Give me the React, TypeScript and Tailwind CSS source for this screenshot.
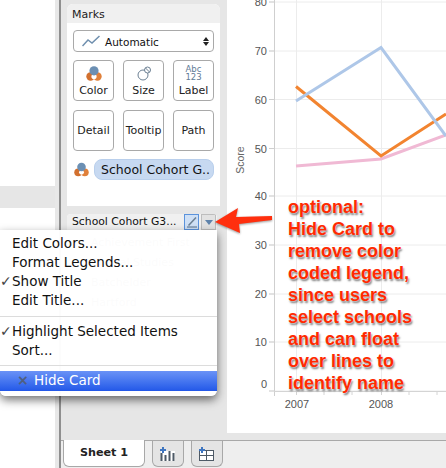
const legendNames = ['Achievement First', 'Capital Studies', 'Batchelder', 'Hartford'];
const yTicks = [
  { label: '80', y: 2, ty: 6 },
  { label: '70', y: 51, ty: 55 },
  { label: '60', y: 99.5, ty: 103.5 },
  { label: '50', y: 148.5, ty: 152.5 },
  { label: '40', y: 196, ty: 200 },
  { label: '30', y: 245, ty: 249 },
  { label: '20', y: 294, ty: 298 },
  { label: '10', y: 342, ty: 346 },
  { label: '0', y: 391, ty: 388 },
];

function ColorIcon({ className }: { className?: string }) {
  return (
    <svg viewBox="0 0 16 15" className={className}>
      <circle cx="4.5" cy="10.5" r="4.2" fill="#d2702f" />
      <circle cx="11.5" cy="10.5" r="4.2" fill="#e0803a" />
      <circle cx="8" cy="10.5" r="2.6" fill="#ffffff" />
      <circle cx="8" cy="4.8" r="4.6" fill="#6b8fb3" />
    </svg>
  );
}

function MarkButton({ label, icon }: { label: string; icon?: React.ReactNode }) {
  return (
    <div className="w-[41px] h-[41px] rounded-[4px] border border-[#a9a9a9] bg-white flex flex-col items-center justify-center">
      {icon && <div className="h-[16px] flex items-center justify-center mb-[3px] mt-[2px]">{icon}</div>}
      <span className="text-[11px] leading-[14px] text-[#222] whitespace-nowrap">{label}</span>
    </div>
  );
}

function MenuItem({ label, checked }: { label: string; checked?: boolean }) {
  return (
    <div className="relative h-[19px] pl-[12px] text-[13.5px] leading-[19px] text-[#111] whitespace-nowrap">
      {checked && <span className="absolute left-0 top-0 text-[#444] text-[14px]">✓</span>}
      {label}
    </div>
  );
}

function Chart() {
  return (
    <svg viewBox="227 0 219 433" className="block w-[219px] h-[433px] bg-white">
      {yTicks.map((t) => (
        <g key={t.label}>
          <line x1="269" x2="446" y1={t.y} y2={t.y} stroke="#ececec" />
          <line x1="269" x2="274" y1={t.y} y2={t.y} stroke="#cfcfcf" />
          <text x="267" y={t.ty} textAnchor="end" fontSize="11" fill="#555" fontFamily="Liberation Sans">
            {t.label}
          </text>
        </g>
      ))}
      <line x1="296.5" x2="296.5" y1="0" y2="391" stroke="#ececec" />
      <line x1="381.5" x2="381.5" y1="0" y2="391" stroke="#ececec" />
      <line x1="274.5" x2="274.5" y1="0" y2="396" stroke="#cfcfcf" />
      <line x1="274" x2="446" y1="391.5" y2="391.5" stroke="#d4d4d4" />
      {[296.5, 324, 352, 381.5, 409, 437].map((x) => (
        <line key={x} x1={x} x2={x} y1="391" y2="395" stroke="#d4d4d4" />
      ))}
      <text x="297" y="408" textAnchor="middle" fontSize="11" fill="#555" fontFamily="Liberation Sans">2007</text>
      <text x="381" y="408" textAnchor="middle" fontSize="11" fill="#555" fontFamily="Liberation Sans">2008</text>
      <text
        transform="translate(244 160) rotate(-90)"
        textAnchor="middle"
        fontSize="10.5"
        fill="#666"
        fontFamily="Liberation Sans"
      >
        Score
      </text>
      <polyline points="296,166 381,159 446,135" fill="none" stroke="#f0b9d4" strokeWidth="3" />
      <polyline points="296,86.5 381,156 446,114" fill="none" stroke="#f28430" strokeWidth="3" />
      <polyline points="296,101 381,47.5 446,136" fill="none" stroke="#aec7e8" strokeWidth="3" />
    </svg>
  );
}

export default function App() {
  return (
    <div className="relative flex w-[446px] h-[468px] overflow-hidden bg-white font-['DejaVu_Sans',sans-serif]">
      {/* left data pane */}
      <div className="w-[55px] shrink-0 flex flex-col bg-white">
        <div className="h-[186px]" />
        <div className="h-[22px] bg-[#e6e6e6]" />
      </div>
      <div className="w-[4px] shrink-0 bg-[#e8e8e8]" />
      <div className="w-[2px] shrink-0 bg-[#8f8f8f]" />

      <div className="flex-1 flex flex-col min-w-0">
        <div className="h-[433px] flex bg-[#e6e6e6]">
          {/* cards */}
          <div className="w-[166px] shrink-0 pl-[6px] pt-[4px] flex flex-col">
            <div className="w-[153px] h-[202px] bg-white rounded-t-[6px] overflow-hidden">
              <div className="h-[19px] bg-[#f0f0f0] pl-[5px] pt-[1px] text-[11px] leading-[19px] text-[#222]">Marks</div>
              <div className="px-[6px] pt-[7px]">
                <div className="h-[22px] rounded-[4px] border border-[#a9a9a9] flex items-center pl-[8px] pr-[4px]">
                  <svg viewBox="0 0 18 12" className="w-[18px] h-[12px]">
                    <polyline points="0.5,11 6,5 10,8 17.5,1" fill="none" stroke="#6f8fae" strokeWidth="1.5" />
                  </svg>
                  <span className="ml-[5px] flex-1 text-[10.5px] leading-[20px] pt-[1px] text-[#111]">Automatic</span>
                  <div className="flex flex-col gap-[1px]">
                    <div className="w-0 h-0 border-x-[3px] border-x-transparent border-b-[4px] border-b-[#222]" />
                    <div className="w-0 h-0 border-x-[3px] border-x-transparent border-t-[4px] border-t-[#222]" />
                  </div>
                </div>
                <div className="mt-[8px] grid grid-cols-[41px_41px_41px] gap-x-[9px] gap-y-[9px]">
                  <MarkButton label="Color" icon={<ColorIcon className="w-[16px] h-[15px]" />} />
                  <MarkButton
                    label="Size"
                    icon={
                      <svg viewBox="0 0 14 15" className="w-[14px] h-[15px]">
                        <circle cx="6" cy="9" r="5" fill="none" stroke="#6b7f92" strokeWidth="1" />
                        <circle cx="10.5" cy="4" r="3" fill="#fff" stroke="#6b7f92" strokeWidth="1" />
                        <line x1="8.5" y1="2" x2="12.5" y2="6" stroke="#6b7f92" strokeWidth="1" />
                      </svg>
                    }
                  />
                  <MarkButton
                    label="Label"
                    icon={
                      <div className="flex flex-col items-center text-[8.5px] leading-[8px] text-[#5f7b96]">
                        <span>Abc</span>
                        <span>123</span>
                      </div>
                    }
                  />
                  <MarkButton label="Detail" />
                  <MarkButton label="Tooltip" />
                  <MarkButton label="Path" />
                </div>
                <div className="mt-[8px] flex items-center">
                  <ColorIcon className="w-[15px] h-[15px] ml-[1px]" />
                  <div className="ml-[5px] w-[120px] h-[21px] rounded-[8px] bg-[#c7d9f1] border border-[#b9cfec] pl-[6px] text-[12.5px] leading-[19px] text-[#111] whitespace-nowrap overflow-hidden">
                    School Cohort G..
                  </div>
                </div>
              </div>
            </div>

            {/* legend card, mostly behind the menu */}
            <div className="mt-[8px] w-[150px] h-[99px] bg-white rounded-t-[4px] overflow-hidden">
              <div className="h-[16px] bg-[#f0f0f0] flex items-center pl-[5px] pr-[1px]">
                <span className="flex-1 text-[10.8px] text-[#111] whitespace-nowrap">School Cohort G3...</span>
                <div className="w-[15px] h-[16px] bg-[#cfe0f5] border border-[#5b93dc] flex items-center justify-center">
                  <svg viewBox="0 0 12 12" className="w-[12px] h-[12px]">
                    <line x1="2.5" y1="9.5" x2="10" y2="1.5" stroke="#6b7f92" strokeWidth="1.6" />
                    <line x1="1" y1="11" x2="11" y2="11" stroke="#54708c" strokeWidth="1" />
                  </svg>
                </div>
                <div className="ml-[2px] w-[15px] h-[16px] bg-[#e2e2e2] border border-[#bdbdbd] flex items-center justify-center">
                  <div className="w-0 h-0 border-x-[4px] border-x-transparent border-t-[5px] border-t-[#5f83ab]" />
                </div>
              </div>
              <div className="pl-[24px] pt-[3px] text-[11px] leading-[20px] text-[#888]">
                {legendNames.map((n) => (
                  <div key={n} className="whitespace-nowrap">{n}</div>
                ))}
              </div>
            </div>
          </div>
          <Chart />
        </div>
        <div className="h-[7px] bg-[#e6e6e6]" />

        {/* sheet tabs */}
        <div className="h-[28px] bg-[#eeeeee] border-t border-[#a8a8a8] flex items-start pl-[2px]">
          <div className="-mt-px w-[82px] h-[27px] bg-white border-x border-b border-[#a8a8a8] rounded-b-[6px] flex items-center justify-center text-[11.2px] font-bold text-[#222]">
            Sheet 1
          </div>
          <div className="ml-[7px] w-[32px] h-[26px] bg-[#e4e4e4] border-x border-b border-[#a8a8a8] rounded-b-[6px] flex items-center justify-center">
            <svg viewBox="0 0 16 14" className="w-[16px] h-[14px]">
              <path d="M1 14V4h14v10" fill="#fff" />
              <path d="M0.5 14V6h2v8zM4.5 14V8h2v6zM8.5 14V4h2v10zM12.5 14V6h2v8z" fill="#4e5a66" />
              <path d="M3 0v6M0 3h6" stroke="#3f76c0" strokeWidth="2" />
            </svg>
          </div>
          <div className="ml-[7px] w-[32px] h-[26px] bg-[#e4e4e4] border-x border-b border-[#a8a8a8] rounded-b-[6px] flex items-center justify-center">
            <svg viewBox="0 0 16 14" className="w-[16px] h-[14px]">
              <rect x="0.5" y="3.5" width="14" height="10" fill="#fff" stroke="#4e5a66" />
              <line x1="0.5" y1="8.5" x2="14.5" y2="8.5" stroke="#4e5a66" />
              <line x1="7.5" y1="3.5" x2="7.5" y2="13.5" stroke="#4e5a66" />
              <path d="M3 0v6M0 3h6" stroke="#3f76c0" strokeWidth="2" />
            </svg>
          </div>
        </div>
      </div>

      {/* dropdown menu */}
      <div className="absolute left-0 top-[230px] w-[217px] h-[166px] pt-[3.5px] bg-white/[0.97] rounded-b-[6px] shadow-[0_4px_10px_rgba(0,0,0,0.55)]">
        <MenuItem label="Edit Colors..." />
        <MenuItem label="Format Legends..." />
        <MenuItem label="Show Title" checked />
        <MenuItem label="Edit Title..." />
        <div className="mt-[6px] mb-[5px] h-px bg-[#dcdcdc]" />
        <MenuItem label="Highlight Selected Items" checked />
        <MenuItem label="Sort..." />
        <div className="mt-[5.5px] mb-[5px] h-px bg-[#dcdcdc]" />
        <div className="relative h-[20px] pl-[34px] bg-gradient-to-b from-[#6a92f6] to-[#2257e8] text-[13.5px] leading-[18px] text-white whitespace-nowrap">
          <span className="absolute left-[17px] top-0 text-[14px] font-bold text-[#4f5f80]">×</span>
          Hide Card
        </div>
      </div>

      {/* callout arrow */}
      <svg viewBox="0 0 60 28" className="absolute left-[214px] top-[206px] w-[60px] h-[28px] drop-shadow-[0_1px_1px_rgba(0,0,0,0.4)]">
        <path d="M1 16 L24 2 L22 11 L58 10 L58 14 L25 18 L26 27 Z" fill="#ff2f0e" />
      </svg>

      {/* annotation */}
      <div className="absolute left-[288px] top-[196px] text-[18px] leading-[22px] font-bold text-[#ff2a00] font-['Liberation_Sans',sans-serif] whitespace-nowrap [text-shadow:0_0_2px_#fff,1px_2px_2px_rgba(0,0,0,0.55)]">
        <div>optional:</div>
        <div>Hide Card to</div>
        <div>remove color</div>
        <div>coded legend,</div>
        <div>since users</div>
        <div>select schools</div>
        <div>and can float</div>
        <div>over lines to</div>
        <div>identify name</div>
      </div>
    </div>
  );
}
